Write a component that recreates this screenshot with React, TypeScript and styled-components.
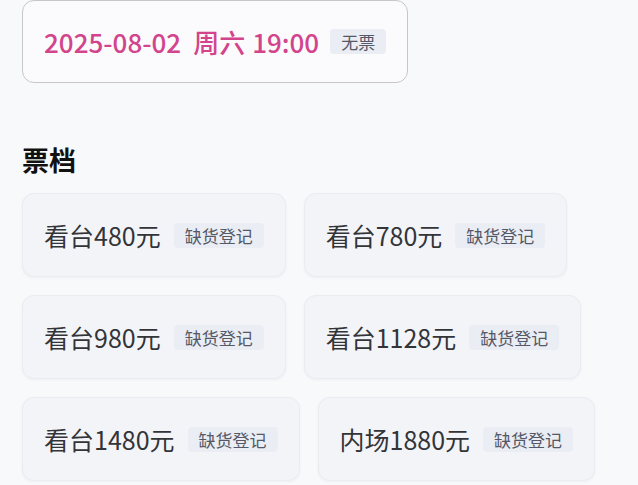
import React from "react";
import styled, { createGlobalStyle } from "styled-components";

const Global = createGlobalStyle`
  html, body {
    margin: 0;
    padding: 0;
    background: #f8f9fb;
    font-family: "Noto Sans CJK SC", "Noto Sans", sans-serif;
  }
`;

const Page = styled.div`
  padding: 0 22px;
  width: 638px;
  height: 485px;
  box-sizing: border-box;
  overflow: hidden;
`;

const DateCard = styled.div`
  display: inline-flex;
  align-items: center;
  box-sizing: border-box;
  height: 83px;
  padding: 0 21px;
  border: 1px solid #c6c6cc;
  border-radius: 12px;
  background: #fbfbfd;
`;

const DatePart = styled.span<{ $ml?: number }>`
  margin-left: ${(p) => p.$ml ?? 0}px;
  font-size: 26px;
  font-weight: 500;
  color: #d2448b;
  line-height: 1;
  white-space: nowrap;
`;

const Tag = styled.span<{ $gap?: number }>`
  display: inline-flex;
  align-items: center;
  justify-content: center;
  height: 25px;
  padding: 0 11px;
  margin-left: ${(p) => p.$gap ?? 13}px;
  border-radius: 4px;
  background: #eaedf4;
  color: #555866;
  font-size: 17px;
  line-height: 1;
  white-space: nowrap;
`;

const Heading = styled.h2`
  margin: 60px 0 0;
  font-size: 27px;
  font-weight: 700;
  line-height: 34px;
  color: #111;
`;

const Grid = styled.div`
  display: flex;
  flex-wrap: wrap;
  gap: 18px;
  margin-top: 16px;
`;

const Card = styled.div`
  display: inline-flex;
  align-items: center;
  box-sizing: border-box;
  height: 84px;
  padding: 0 21px;
  border: 1px solid #ebecf1;
  border-radius: 12px;
  background: #f3f4f8;
  box-shadow: 0 1px 3px rgba(30, 40, 80, 0.05);
`;

const Price = styled.span`
  font-size: 25px;
  font-weight: 400;
  color: #333438;
  line-height: 1;
  white-space: nowrap;
`;

const tiers = [
  "看台480元",
  "看台780元",
  "看台980元",
  "看台1128元",
  "看台1480元",
  "内场1880元",
];

export default function App() {
  return (
    <>
      <Global />
      <Page>
        <DateCard>
          <DatePart>2025-08-02</DatePart>
          <DatePart $ml={12}>周六</DatePart>
          <DatePart $ml={7}>19:00</DatePart>
          <Tag $gap={11}>无票</Tag>
        </DateCard>
        <Heading>票档</Heading>
        <Grid>
          {tiers.map((t) => (
            <Card key={t}>
              <Price>{t}</Price>
              <Tag>缺货登记</Tag>
            </Card>
          ))}
        </Grid>
      </Page>
    </>
  );
}
